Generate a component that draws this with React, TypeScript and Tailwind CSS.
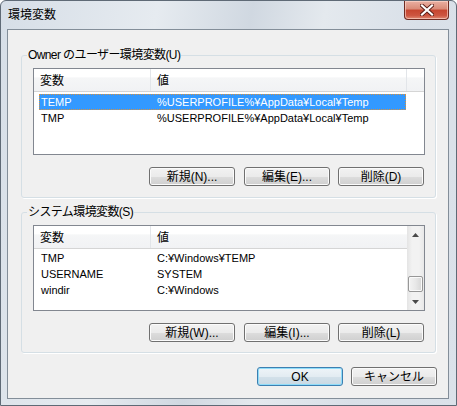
import React from 'react';

type Row = { name: string; value: string; selected?: boolean };

const userVars: Row[] = [
  { name: 'TEMP', value: '%USERPROFILE%¥AppData¥Local¥Temp', selected: true },
  { name: 'TMP', value: '%USERPROFILE%¥AppData¥Local¥Temp' },
];

const systemVars: Row[] = [
  { name: 'TMP', value: 'C:¥Windows¥TEMP' },
  { name: 'USERNAME', value: 'SYSTEM' },
  { name: 'windir', value: 'C:¥Windows' },
];

function WinButton({ label, primary = false }: { label: string; primary?: boolean }) {
  return (
    <button
      type="button"
      className={
        primary
          ? 'flex h-[19px] w-[86px] items-center justify-center rounded-[3px] border border-[#3c7fb1] bg-[linear-gradient(to_bottom,#eef4f8_0%,#e3ecf2_50%,#d3e1ea_51%,#c8d8e3_100%)] text-[12px] leading-none text-black shadow-[inset_0_0_0_1px_#8fdcf9]'
          : 'flex h-[19px] w-[86px] items-center justify-center rounded-[3px] border border-[#707070] bg-[linear-gradient(to_bottom,#f2f2f2_0%,#ebebeb_50%,#dddddd_51%,#cfcfcf_100%)] text-[12px] leading-none text-black shadow-[inset_0_0_0_1px_#fbfbfb]'
      }
    >
      {label}
    </button>
  );
}

function ListHeader({ narrow = false }: { narrow?: boolean }) {
  return (
    <div className="flex h-[23px] shrink-0 border-b border-[#d5d5d5] bg-[linear-gradient(to_bottom,#ffffff_0%,#ffffff_38%,#f5f6f7_39%,#f1f2f4_100%)] text-[12px] leading-none">
      <div className="flex w-[117px] shrink-0 items-center border-r border-[#e2e5e9] pl-[6px] pt-[2px]">変数</div>
      <div
        className={
          narrow
            ? 'flex w-[255px] shrink-0 items-center pl-[6px] pt-[2px]'
            : 'flex w-[256px] shrink-0 items-center border-r border-[#e2e5e9] pl-[6px] pt-[2px]'
        }
      >
        値
      </div>
    </div>
  );
}

function ListRows({ rows, top }: { rows: Row[]; top: 'a' | 'b' }) {
  return (
    <div className={top === 'a' ? 'flex flex-col pt-[2px]' : 'flex flex-col pt-[1px]'}>
      {rows.map((r) => (
        <div
          key={r.name}
          className={
            r.selected
              ? 'ml-[5px] flex h-[16px] w-[367px] items-center border border-dotted border-[#d9913f] bg-[#3399ff] text-[11px] leading-none text-white'
              : 'ml-[5px] flex h-[16px] w-[367px] items-center border border-transparent text-[11px] leading-none text-black'
          }
        >
          <div className="w-[116px] shrink-0 pl-[1px]">{r.name}</div>
          <div className="pl-[1px] whitespace-nowrap">{r.value}</div>
        </div>
      ))}
    </div>
  );
}

function Arrow({ down = false }: { down?: boolean }) {
  return (
    <svg width="7" height="4" viewBox="0 0 7 4">
      <path d={down ? 'M0 0 H7 L3.5 4 Z' : 'M0 4 H7 L3.5 0 Z'} fill="#4a4a4a" />
    </svg>
  );
}

function ScrollBar() {
  return (
    <div className="flex w-[17px] shrink-0 flex-col bg-[linear-gradient(to_right,#e4e4e4_0%,#f2f2f2_30%,#f2f2f2_70%,#e8e8e8_100%)]">
      <div className="flex h-[17px] items-center justify-center">
        <Arrow />
      </div>
      <div className="flex-1">
        <div className="mx-[1px] mt-[33px] h-[16px] rounded-[2px] border border-[#979797] bg-[linear-gradient(to_right,#f3f3f3_0%,#e8e8e8_50%,#d6d6d6_100%)] shadow-[inset_0_0_0_1px_#fafafa]" />
      </div>
      <div className="flex h-[17px] items-center justify-center">
        <Arrow down />
      </div>
    </div>
  );
}

function CloseButton() {
  return (
    <div className="flex h-[19px] w-[45px] items-center justify-center rounded-b-[4px] border border-t-0 border-[#6e2b22] bg-[linear-gradient(to_bottom,#eab0a2_0%,#d98a77_45%,#c6452f_50%,#cd5540_80%,#e08a74_100%)] shadow-[inset_0_0_0_1px_rgba(255,220,210,0.6)]">
      <svg width="14" height="12" viewBox="0 0 14 12">
        <path d="M2 1.5 L12 10.5 M12 1.5 L2 10.5" stroke="#5a1d16" strokeWidth="4" strokeLinecap="square" />
        <path d="M2 1.5 L12 10.5 M12 1.5 L2 10.5" stroke="#ffffff" strokeWidth="2.2" strokeLinecap="square" />
      </svg>
    </div>
  );
}

export default function App() {
  return (
    <div className="h-[406px] w-[457px] overflow-hidden rounded-t-[6px] border border-[#5f6a76] bg-[linear-gradient(100deg,#d6dee7_0%,#e6ebf0_30%,#d0d8e1_48%,#e4e9ee_62%,#d9e0e8_80%,#dbe2ea_100%)] font-['Liberation_Sans','Noto_Sans_CJK_JP',sans-serif] text-black">
      {/* Title bar */}
      <div className="flex h-[28px] items-start justify-between pl-[7px] pr-[7px]">
        <span className="pt-[7px] text-[12px] leading-[14px]">環境変数</span>
        <CloseButton />
      </div>

      {/* Client area */}
      <div className="ml-[6px] mr-[7px] h-[370px] border border-[#838e99] bg-[#f0f0f0]">
        {/* User variables */}
        <fieldset className="ml-[13px] mt-[18px] w-[415px] rounded-[3px] border border-[#d5dfe5] pb-[11px] shadow-[1px_1px_0_#ffffff]">
          <legend className="ml-[5px] px-[1px] text-[12px] leading-[14px] tracking-[-0.6px]">Owner のユーザー環境変数(U)</legend>
          <div className="ml-[11px] mt-[6px] flex h-[87px] w-[392px] flex-col border border-[#828790] bg-white">
            <ListHeader />
            <ListRows rows={userVars} top="a" />
          </div>
          <div className="ml-[127px] mt-[12px] flex">
            <WinButton label="新規(N)..." />
            <div className="ml-[9px]">
              <WinButton label="編集(E)..." />
            </div>
            <div className="ml-[8px]">
              <WinButton label="削除(D)" />
            </div>
          </div>
        </fieldset>

        {/* System variables */}
        <fieldset className="ml-[13px] mt-[7px] w-[415px] rounded-[3px] border border-[#d5dfe5] pb-[10px] shadow-[1px_1px_0_#ffffff]">
          <legend className="ml-[5px] px-[1px] text-[12px] leading-[14px] tracking-[-0.6px]">システム環境変数(S)</legend>
          <div className="ml-[11px] mt-[6px] flex h-[86px] w-[392px] border border-[#828790] bg-white">
            <div className="flex min-w-0 flex-1 flex-col overflow-hidden">
              <ListHeader narrow />
              <ListRows rows={systemVars} top="b" />
            </div>
            <ScrollBar />
          </div>
          <div className="ml-[127px] mt-[12px] flex">
            <WinButton label="新規(W)..." />
            <div className="ml-[9px]">
              <WinButton label="編集(I)..." />
            </div>
            <div className="ml-[8px]">
              <WinButton label="削除(L)" />
            </div>
          </div>
        </fieldset>

        {/* Dialog buttons */}
        <div className="ml-[249px] mt-[14px] flex">
          <WinButton label="OK" primary />
          <div className="ml-[8px]">
            <WinButton label="キャンセル" />
          </div>
        </div>
      </div>
    </div>
  );
}
